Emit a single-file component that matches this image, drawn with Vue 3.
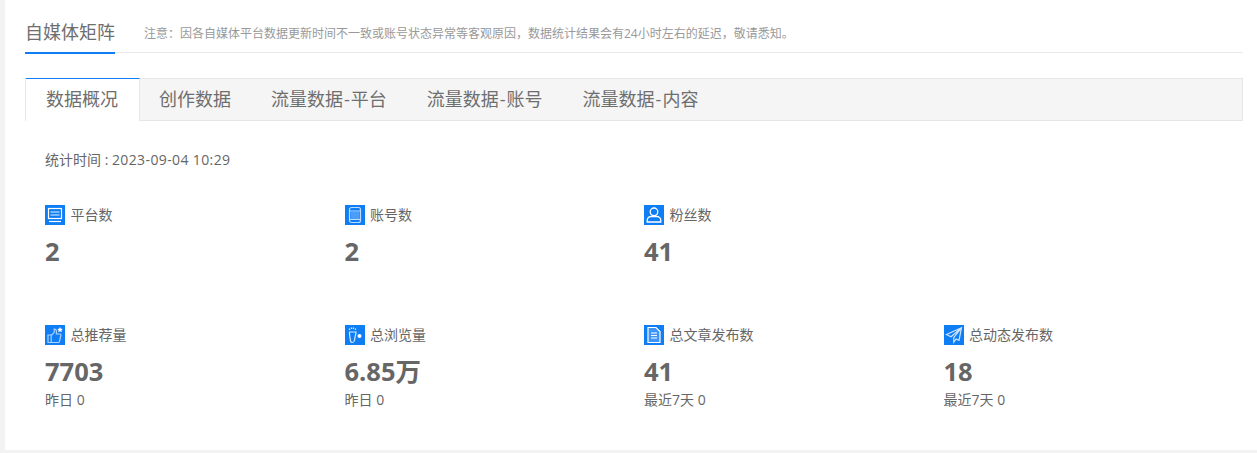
<script setup>
const tabs = [['数据概况'], ['创作数据'], ['流量数据', '平台'], ['流量数据', '账号'], ['流量数据', '内容']]
const stats = [
  { icon: 'screen', label: '平台数', value: '2' },
  { icon: 'phone', label: '账号数', value: '2' },
  { icon: 'user', label: '粉丝数', value: '41' },
  { icon: '', label: '', value: '' },
  { icon: 'thumb', label: '总推荐量', value: '7703', sub: '昨日 0' },
  { icon: 'foot', label: '总浏览量', value: '6.85万', sub: '昨日 0' },
  { icon: 'doc', label: '总文章发布数', value: '41', sub: '最近7天 0' },
  { icon: 'plane', label: '总动态发布数', value: '18', sub: '最近7天 0' },
]
</script>

<template>
  <div class="page">
    <div class="card">
      <div class="head">
        <div class="title">自媒体矩阵</div>
        <div class="note">注意：因各自媒体平台数据更新时间不一致或账号状态异常等客观原因，数据统计结果会有24小时左右的延迟，敬请悉知。</div>
      </div>
      <div class="tabs">
        <div v-for="(t, i) in tabs" :key="i" class="tab" :class="{ active: i === 0 }">{{ t[0] }}<template v-if="t[1]"><span class="dash">-</span>{{ t[1] }}</template></div>
      </div>
      <div class="body">
        <div class="time">统计时间 : <span class="stamp">2023-09-04 10:29</span></div>
        <div class="grid">
          <div v-for="(s, i) in stats" :key="i" class="stat">
            <template v-if="s.label">
              <div class="label">
                <span class="icon">
                  <svg width="20" height="20" viewBox="0 0 20 20" fill="none" stroke="#e3f0ff" stroke-width="1.2">
                    <template v-if="s.icon === 'screen'">
                      <rect x="3.500" y="3.500" width="13" height="10" stroke="#fff" />
                      <path d="M5.500 7h9M5.500 10h9" stroke="#9fcbff" stroke-width="1.500" />
                      <path d="M4 16.500h12" stroke="#fff" />
                    </template>
                    <template v-else-if="s.icon === 'phone'">
                      <rect x="4.500" y="2.500" width="11" height="15" rx="2" stroke="#bcdcff" />
                      <path d="M5 6h10M5 14.500h10" stroke="#bcdcff" />
                      <rect x="5.500" y="7" width="9" height="7" fill="#4a9dfa" stroke="none" />
                    </template>
                    <template v-else-if="s.icon === 'user'">
                      <circle cx="10" cy="6.800" r="3.800" stroke="#fff" stroke-width="1.300" />
                      <path d="M3.200 17v-1.500c0-2.500 2-4 4-4h5.600c2 0 4 1.500 4 4V17z" stroke="#fff" stroke-width="1.300" />
                    </template>
                    <template v-else-if="s.icon === 'thumb'">
                      <path d="M3 10h3.200v7.500H3zM6.200 10.500l3-3.200V4c1.500 0 2.200 1.200 2.200 2.500V9h3.400c.9 0 1.300.6 1.100 1.300l-1.400 6c-.2.800-.7 1.200-1.400 1.200H6.200" stroke="#a9d2ff" />
                      <path d="M15 2l.9 1.800 1.900.2-1.400 1.300.4 1.900-1.800-1-1.800 1 .4-1.900L12.200 4l1.900-.2z" fill="#fff" stroke="none" />
                    </template>
                    <template v-else-if="s.icon === 'foot'">
                      <path d="M4.500 7h6.500c0 2.500-.6 3.500-1 5-.3 1.200-.2 2-.4 3-.3 1.500-1 2.500-2.100 2.500-1.300 0-2.100-1-2.200-2.800-.1-1-.2-1.700-.4-2.700-.3-1.500-.4-3-.4-5z" stroke="#d5e9ff" />
                      <path d="M4.500 3.500v1.500M6.500 2.500V4M8.500 2.500V4M10.500 3.500V5" stroke="#d5e9ff" />
                      <circle cx="14.500" cy="11" r="2" fill="#fff" stroke="none" />
                    </template>
                    <template v-else-if="s.icon === 'doc'">
                      <path d="M4 2.500h8l4 4v11H4z" fill="#3d95f8" stroke="#fff" />
                      <path d="M7 8h6M7 10.500h6M7 13h6" stroke="#fff" />
                    </template>
                    <template v-else-if="s.icon === 'plane'">
                      <path d="M17.500 2.800L2.500 9.500l4.500 2.200L17.500 2.800 9.800 12.500v4.700l2.400-3.200 2.800 1.300z" stroke="#cfe5ff" />
                    </template>
                  </svg>
                </span>
                <span>{{ s.label }}</span>
              </div>
              <div class="value">{{ s.value }}</div>
              <div v-if="s.sub" class="sub">{{ s.sub }}</div>
            </template>
          </div>
        </div>
      </div>
    </div>
  </div>
</template>

<style>
html, body { margin: 0; background: #f3f3f3; }
</style>

<style scoped>
.page {
  width: 1257px;
  height: 453px;
  overflow: hidden;
  box-sizing: border-box;
  padding: 0 0 3px 5px;
  background: #f3f3f3;
  font-family: "Open Sans", "Noto Sans CJK SC", sans-serif;
  color: #666;
}
.card {
  height: 450px;
  box-sizing: border-box;
  background: #fff;
  padding: 0 14px 0 20px;
}
.head {
  display: flex;
  align-items: flex-end;
  height: 53px;
  border-bottom: 1px solid #e8e8e8;
  box-sizing: border-box;
}
.title {
  height: 54px;
  box-sizing: border-box;
  line-height: 65px;
  font-size: 18px;
  width: 90px;
  white-space: nowrap;
  color: #6e6e6e;
  border-bottom: 2px solid #0f7ef5;
  margin-bottom: -2px;
}
.note {
  margin-left: 29px;
  font-size: 12px;
  line-height: 20px;
  padding-bottom: 8px;
  color: #999;
  white-space: nowrap;
}
.tabs {
  display: flex;
  margin-top: 25px;
  height: 43px;
  box-sizing: border-box;
  background: #f5f5f5;
  border: 1px solid #e6e6e6;
}
.tab {
  height: 43px;
  margin-top: -1px;
  box-sizing: border-box;
  padding: 0 20px;
  font-size: 18px;
  line-height: 43px;
  color: #6e6e6e;
  white-space: nowrap;
}
.tab.active {
  background: #fff;
  border-top: 1px solid #0f7ef5;
  border-right: 1px solid #e6e6e6;
  padding-right: 21px;
  margin-right: -1px;
  line-height: 41px;
}
.dash { margin: 0 1px; }
.body {
  padding: 29px 0 0 20px;
}
.time {
  font-size: 14px;
  line-height: 20px;
  color: #666;
}
.stamp { letter-spacing: 0.38px; }
.grid {
  display: grid;
  grid-template-columns: repeat(4, 299.5px);
  grid-auto-rows: 120px;
  margin-top: 35px;
}
.label {
  display: flex;
  align-items: center;
  gap: 5.5px;
  font-size: 14px;
  line-height: 20px;
  color: #666;
}
.icon {
  width: 20px;
  height: 20px;
  background: #0f7ef5;
  flex: none;
  display: block;
}
.icon svg { display: block; }
.value {
  margin-top: 10px;
  font-size: 25.5px;
  font-weight: 700;
  line-height: 32px;
  color: #666;
}
.sub {
  margin-top: 3px;
  font-size: 14px;
  line-height: 20px;
  color: #666;
}
</style>
